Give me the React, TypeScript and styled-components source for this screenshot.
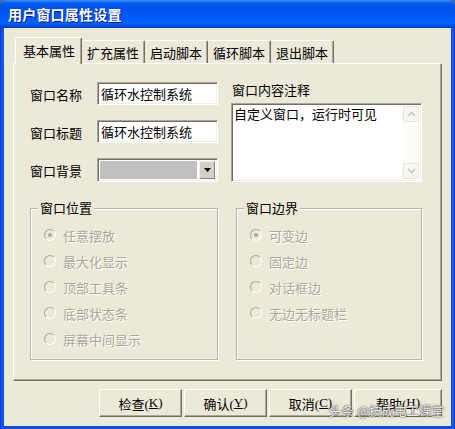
import React from "react"
import styled, { createGlobalStyle } from "styled-components"

const GlobalStyle = createGlobalStyle`
  html, body {
    margin: 0;
    padding: 0;
    background: #3a6ea5;
    overflow: hidden;
  }
  body {
    font-family: "Noto Sans CJK SC", "DejaVu Sans", sans-serif;
    font-size: 13px;
  }
`

const face = "#ECE9D8"
const shadow = "#ACA899"
const darkShadow = "#716F64"
const grayText = "#ACA899"

const tabs = ["基本属性", "扩充属性", "启动脚本", "循环脚本", "退出脚本"]
const positions = ["任意摆放", "最大化显示", "顶部工具条", "底部状态条", "屏幕中间显示"]
const borders = ["可变边", "固定边", "对话框边", "无边无标题栏"]
const buttons = [
  { text: "检查", key: "K", width: 83 },
  { text: "确认", key: "Y", width: 83 },
  { text: "取消", key: "C", width: 83 },
  { text: "帮助", key: "H", width: 88 },
]

const App = () => {
  return (
    <>
      <GlobalStyle />
      <Window>
        <TitleBar>用户窗口属性设置</TitleBar>
        <Client>
          <TabStrip>
            {tabs.map((t, i) => (
              <Tab key={t} active={i === 0}>
                {t}
              </Tab>
            ))}
          </TabStrip>
          <Panel>
            <TopGrid>
              <Fields>
                <FieldRow>
                  <Label>窗口名称</Label>
                  <TextBox>循环水控制系统</TextBox>
                </FieldRow>
                <FieldRow>
                  <Label>窗口标题</Label>
                  <TextBox>循环水控制系统</TextBox>
                </FieldRow>
                <FieldRow>
                  <Label>窗口背景</Label>
                  <Combo>
                    <ComboFill />
                    <DropButton>
                      <svg width="7" height="4" viewBox="0 0 7 4">
                        <path d="M0 0h7L3.5 4z" fill="#000" />
                      </svg>
                    </DropButton>
                  </Combo>
                </FieldRow>
              </Fields>
              <NoteColumn>
                <NoteLabel>窗口内容注释</NoteLabel>
                <NoteBox>
                  <NoteText>自定义窗口，运行时可见</NoteText>
                  <ScrollBar>
                    <ScrollArrow>
                      <svg width="9" height="6" viewBox="0 0 9 6">
                        <path d="M1 5l3.5-3.5L8 5" stroke="#C9C7BA" strokeWidth="1.6" fill="none" />
                      </svg>
                    </ScrollArrow>
                    <ScrollArrow>
                      <svg width="9" height="6" viewBox="0 0 9 6">
                        <path d="M1 1l3.5 3.5L8 1" stroke="#C9C7BA" strokeWidth="1.6" fill="none" />
                      </svg>
                    </ScrollArrow>
                  </ScrollBar>
                </NoteBox>
              </NoteColumn>
            </TopGrid>
            <GroupGrid>
              <Group>
                <GroupTitle>窗口位置</GroupTitle>
                {positions.map((p, i) => (
                  <RadioRow key={p}>
                    <Radio checked={i === 0} />
                    <RadioText>{p}</RadioText>
                  </RadioRow>
                ))}
              </Group>
              <Group shift>
                <GroupTitle>窗口边界</GroupTitle>
                {borders.map((p, i) => (
                  <RadioRow key={p}>
                    <Radio checked={i === 0} />
                    <RadioText>{p}</RadioText>
                  </RadioRow>
                ))}
              </Group>
            </GroupGrid>
          </Panel>
          <ButtonRow>
            {buttons.map(b => (
              <Button key={b.text} w={b.width}>
                {b.text}(<u>{b.key}</u>)
              </Button>
            ))}
          </ButtonRow>
        </Client>
        <Watermark>头条 @技成电工课堂</Watermark>
      </Window>
    </>
  )
}

const Window = styled.div`
  position: relative;
  width: 455px;
  height: 429px;
  display: flex;
  flex-direction: column;
  box-sizing: border-box;
  background: linear-gradient(to right, #0831D9 0px, #1660E8 2px, #0A4FDF 4px, #0A4FDF 451px, #1660E8 453px, #0831D9 455px);
  border-radius: 7px 7px 0 0;
  overflow: hidden;
`
const TitleBar = styled.div`
  height: 28px;
  flex: none;
  box-sizing: border-box;
  padding: 0 0 0 8px;
  display: flex;
  align-items: center;
  color: #fff;
  font-size: 14px;
  font-weight: 700;
  letter-spacing: 0.2px;
  text-shadow: 1px 1px 0 #0A1883;
  background: linear-gradient(
    to bottom,
    #3D95FF 0px,
    #0A5CF0 3px,
    #0050EE 8px,
    #0058F5 16px,
    #0063FF 23px,
    #0055EE 25px,
    #0040D0 27px,
    #0038C8 28px
  );
`
const Client = styled.div`
  flex: 1;
  margin: 0 4px 3px 4px;
  background: ${face};
  padding: 9px 9px 0 9px;
  display: flex;
  flex-direction: column;
`
const TabStrip = styled.div`
  display: flex;
  align-items: flex-end;
  height: 26px;
  padding-left: 4px;
  position: relative;
  z-index: 1;
`
const Tab = styled.div<{ active?: boolean }>`
  box-sizing: border-box;
  height: ${p => (p.active ? 27 : 23)}px;
  margin-bottom: ${p => (p.active ? -1 : 0)}px;
  margin-left: ${p => (p.active ? -2 : 0)}px;
  padding: ${p => (p.active ? "0 6px 2px 7px" : "0 5px")};
  display: flex;
  align-items: center;
  background: ${face};
  border-top: 1px solid #fff;
  border-left: 1px solid #fff;
  border-right: 1px solid ${darkShadow};
  box-shadow: inset -1px 0 0 ${shadow};
  border-radius: 2px 2px 0 0;
  color: #000;
  font-size: 13px;
  white-space: nowrap;
  & + & {
    border-left: ${p => (p.active ? "1px solid #fff" : "none")};
  }
`
const Panel = styled.div`
  height: 318px;
  box-sizing: border-box;
  border-top: 1px solid #fff;
  border-left: 1px solid #fff;
  border-right: 1px solid ${darkShadow};
  border-bottom: 1px solid ${darkShadow};
  box-shadow: inset -1px -1px 0 ${shadow};
  padding: 18px 0 0 16px;
`
const TopGrid = styled.div`
  display: grid;
  grid-template-columns: 188px 191px;
  column-gap: 13px;
`
const Fields = styled.div`
  display: flex;
  flex-direction: column;
  gap: 15px;
`
const FieldRow = styled.div`
  display: flex;
  align-items: center;
  height: 23px;
`
const Label = styled.div`
  width: 67px;
  color: #000;
  font-size: 13px;
  padding-top: 2px;
`
const sunken = `
  box-sizing: border-box;
  border-top: 1px solid ${shadow};
  border-left: 1px solid ${shadow};
  border-right: 1px solid #fff;
  border-bottom: 1px solid #fff;
  box-shadow: inset 1px 1px 0 ${darkShadow}, inset -1px -1px 0 #F1EFE2;
`
const TextBox = styled.div`
  ${sunken}
  width: 121px;
  height: 23px;
  background: #fff;
  padding: 0 0 0 3px;
  display: flex;
  align-items: center;
  font-size: 13px;
  color: #000;
  white-space: nowrap;
`
const Combo = styled.div`
  ${sunken}
  width: 121px;
  height: 24px;
  background: #fff;
  padding: 2px;
  display: flex;
  gap: 2px;
`
const ComboFill = styled.div`
  flex: 1;
  background: #C0C0C0;
`
const DropButton = styled.div`
  width: 16px;
  background: #D4D0C8;
  border-top: 1px solid #F0F0F0;
  border-left: 1px solid #F0F0F0;
  border-right: 1px solid #808080;
  border-bottom: 1px solid #808080;
  box-sizing: border-box;
  display: flex;
  align-items: center;
  justify-content: center;
`
const NoteColumn = styled.div`
  display: flex;
  flex-direction: column;
`
const NoteLabel = styled.div`
  height: 21px;
  line-height: 16px;
  padding-left: 1px;
  font-size: 13px;
  color: #000;
`
const NoteBox = styled.div`
  ${sunken}
  height: 79px;
  background: #fff;
  display: flex;
  padding: 2px;
`
const NoteText = styled.div`
  flex: 1;
  font-size: 13px;
  line-height: 16px;
  color: #000;
  white-space: nowrap;
`
const ScrollBar = styled.div`
  width: 16px;
  background: #FCFCF9;
  display: flex;
  flex-direction: column;
  justify-content: space-between;
`
const ScrollArrow = styled.div`
  height: 16px;
  box-sizing: border-box;
  border: 1px solid #E8E6DC;
  border-radius: 2px;
  background: #F7F6F1;
  display: flex;
  align-items: center;
  justify-content: center;
`
const GroupGrid = styled.div`
  display: grid;
  grid-template-columns: 188px 191px;
  column-gap: 13px;
  margin-top: 26px;
`
const Group = styled.div<{ shift?: boolean }>`
  position: relative;
  height: 152px;
  box-sizing: border-box;
  margin-left: ${p => (p.shift ? 5 : 0)}px;
  border: 1px solid #B8B6AA;
  box-shadow: inset 1px 1px 0 #fff, 1px 1px 0 #fff;
  padding-top: 13px;
`
const GroupTitle = styled.span`
  position: absolute;
  top: -9px;
  left: 7px;
  padding: 0 2px;
  background: ${face};
  font-size: 13px;
  line-height: 16px;
  color: #000;
`
const RadioRow = styled.div`
  height: 26px;
  display: flex;
  align-items: center;
  padding-left: 13px;
  gap: 7px;
`
const Radio = styled.span<{ checked?: boolean }>`
  position: relative;
  width: 12px;
  height: 12px;
  box-sizing: border-box;
  border-radius: 50%;
  border: 1px solid;
  border-color: ${shadow} #fff #fff ${shadow};
  background: ${face};
  flex: none;
  &::after {
    content: "";
    display: ${p => (p.checked ? "block" : "none")};
    position: absolute;
    left: 3px;
    top: 3px;
    width: 4px;
    height: 4px;
    border-radius: 50%;
    background: ${grayText};
  }
`
const RadioText = styled.span`
  color: ${grayText};
  font-size: 13px;
  padding-top: 1px;
  text-shadow: 1px 1px 0 #fff;
`
const ButtonRow = styled.div`
  display: flex;
  justify-content: flex-end;
  gap: 2px;
  margin-top: 8px;
`
const Button = styled.div<{ w: number }>`
  width: ${p => p.w}px;
  height: 28px;
  box-sizing: border-box;
  background: ${face};
  border-top: 1px solid #fff;
  border-left: 1px solid #fff;
  border-right: 1px solid ${darkShadow};
  border-bottom: 1px solid ${darkShadow};
  box-shadow: inset -1px -1px 0 ${shadow};
  display: flex;
  align-items: center;
  justify-content: center;
  font-family: "Liberation Serif", "Noto Sans CJK SC", serif;
  font-size: 13px;
  color: #000;
  white-space: nowrap;
`
const Watermark = styled.div`
  position: absolute;
  right: 11px;
  bottom: 9px;
  font-size: 12.5px;
  color: rgba(255, 255, 255, 0.92);
  text-shadow: 0 0 1px #333, 0 0 2px #555;
  white-space: nowrap;
`

export default App
